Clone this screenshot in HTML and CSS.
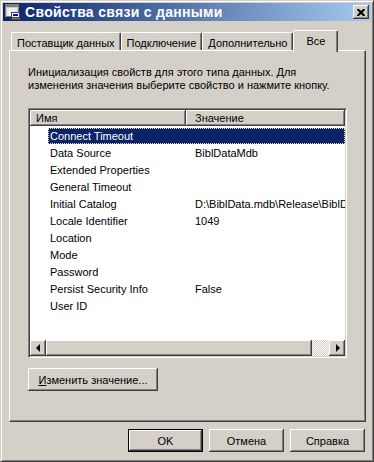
FILE: index.html
```html
<!DOCTYPE html>
<html lang="ru">
<head>
  <meta charset="UTF-8">
  <meta name="viewport" content="width=device-width, initial-scale=1.0">
  <title>Свойства связи с данными</title>
  <link rel="stylesheet" href="styles.css">
</head>
<body>
  <div class="window">
    <div class="titlebar">
      <svg class="app-icon" width="16" height="16" viewBox="0 0 16 16">
        <rect x="0.5" y="0.5" width="13" height="12" fill="#d4d0c8" stroke="#808080"/>
        <rect x="1" y="1" width="12" height="2" fill="#808080"/>
        <path d="M2 5h10M2 7h10M2 9h10M2 11h5M5 4v8M9 4v4" stroke="#fff" stroke-width="1"/>
        <rect x="6.5" y="8.5" width="8" height="5" fill="#fff" stroke="#404040"/>
        <rect x="8" y="10" width="5" height="2" fill="#0000ff"/>
        <rect x="7" y="14" width="8" height="2" fill="#808080"/>
        <rect x="6" y="15" width="10" height="1" fill="#404040"/>
      </svg>
      <span class="title">Свойства связи с данными</span>
      <div class="close-btn">
        <svg width="8" height="7" viewBox="0 0 8 7">
          <path d="M0 0h2l2 2l2 -2h2v1l-2.5 2.5l2.5 2.5v1h-2l-2 -2l-2 2h-2v-1l2.5 -2.5l-2.5 -2.5z" fill="#000"/>
        </svg>
      </div>
    </div>

    <div class="content">
      <div class="tabs">
        <div class="tab">Поставщик данных</div>
        <div class="tab">Подключение</div>
        <div class="tab">Дополнительно</div>
        <div class="tab active">Все</div>
      </div>

      <div class="panel">
        <p class="desc">Инициализация свойств для этого типа данных. Для<br>изменения значения выберите свойство и нажмите кнопку.</p>

        <div class="listview">
          <div class="lv-header">
            <div class="lv-col col-name">Имя</div>
            <div class="lv-col col-value">Значение</div>
          </div>
          <div class="lv-body">
            <div class="lv-row selected"><span class="name">Connect Timeout</span><span class="value"></span></div>
            <div class="lv-row"><span class="name">Data Source</span><span class="value">BiblDataMdb</span></div>
            <div class="lv-row"><span class="name">Extended Properties</span><span class="value"></span></div>
            <div class="lv-row"><span class="name">General Timeout</span><span class="value"></span></div>
            <div class="lv-row"><span class="name">Initial Catalog</span><span class="value">D:\BiblData.mdb\Release\BiblData.mdb</span></div>
            <div class="lv-row"><span class="name">Locale Identifier</span><span class="value">1049</span></div>
            <div class="lv-row"><span class="name">Location</span><span class="value"></span></div>
            <div class="lv-row"><span class="name">Mode</span><span class="value"></span></div>
            <div class="lv-row"><span class="name">Password</span><span class="value"></span></div>
            <div class="lv-row"><span class="name">Persist Security Info</span><span class="value">False</span></div>
            <div class="lv-row"><span class="name">User ID</span><span class="value"></span></div>
          </div>
          <div class="hscroll">
            <div class="sb-btn"><span class="arrow-left"></span></div>
            <div class="sb-thumb"></div>
            <div class="sb-track"></div>
            <div class="sb-btn"><span class="arrow-right"></span></div>
          </div>
        </div>

        <button class="btn edit-btn"><u>И</u>зменить значение...</button>
      </div>

      <div class="dialog-buttons">
        <button class="btn default">OK</button>
        <button class="btn">Отмена</button>
        <button class="btn">Справка</button>
      </div>
    </div>
  </div>
</body>
</html>
```

FILE: styles.css
```css
body {
  margin: 0;
  font-family: "Liberation Sans", Arial, sans-serif;
  font-size: 11px;
  color: #000;
  background: #d4d0c8;
}

.window {
  width: 374px;
  height: 462px;
  box-sizing: border-box;
  background: #d4d0c8;
  border: 1px solid;
  border-color: #d4d0c8 #404040 #404040 #d4d0c8;
  box-shadow: inset 1px 1px #fff, inset -1px -1px #808080;
  padding: 2px;
}

/* title bar */
.titlebar {
  height: 18px;
  display: flex;
  align-items: center;
  padding: 0 2px;
  background: linear-gradient(to right, #0a246a, #a6caf0);
  color: #fff;
}

.app-icon {
  flex: none;
  margin-right: 4px;
}

.title {
  font-family: "Liberation Sans", Arial, sans-serif;
  font-weight: bold;
  font-size: 14px;
  letter-spacing: 0.3px;
  white-space: nowrap;
}

.close-btn {
  margin-left: auto;
  width: 16px;
  height: 14px;
  box-sizing: border-box;
  background: #d4d0c8;
  box-shadow: inset -1px -1px #404040, inset 1px 1px #fff, inset -2px -2px #808080;
  display: flex;
  align-items: center;
  justify-content: center;
}

.close-btn svg {
  display: block;
}

/* body of the dialog */
.content {
  padding: 0 5px 0 6px;
}

.tabs {
  display: flex;
  height: 20px;
  margin-top: 9px;
  padding-left: 2px;
}

.tab {
  height: 18px;
  margin-top: 2px;
  box-sizing: border-box;
  padding: 3px 5px 0;
  line-height: 14px;
  white-space: nowrap;
  border: 1px solid;
  border-bottom: none;
  border-color: #fff #404040 #fff #fff;
  border-radius: 2px 2px 0 0;
  box-shadow: inset -1px 0 #808080;
}

.tab.active {
  position: relative;
  z-index: 1;
  height: 22px;
  margin-top: 0;
  margin-bottom: -2px;
  padding: 3px 12px 0;
  background: #d4d0c8;
}

.panel {
  height: 372px;
  box-sizing: border-box;
  border: 1px solid;
  border-color: #fff #404040 #404040 #fff;
  box-shadow: inset -1px -1px #808080;
  padding: 15px 18px 0;
}

.desc {
  margin: 0;
  line-height: 13px;
}

/* list view */
.listview {
  margin-top: 16px;
  height: 250px;
  box-sizing: border-box;
  padding: 1px;
  border: 1px solid;
  border-color: #808080 #fff #fff #808080;
  box-shadow: inset 1px 1px #404040, inset -1px -1px #d4d0c8;
  background: #fff;
  display: flex;
  flex-direction: column;
}

.lv-header {
  display: flex;
  height: 16px;
  flex: none;
}

.lv-col {
  box-sizing: border-box;
  background: #d4d0c8;
  line-height: 16px;
  box-shadow: inset -1px -1px #404040, inset 1px 1px #fff, inset -2px -2px #808080;
}

.col-name {
  width: 156px;
  padding-left: 6px;
}

.col-value {
  flex: 1;
  padding-left: 9px;
}

.lv-body {
  flex: 1;
  padding-top: 2px;
  overflow: hidden;
}

.lv-row {
  display: flex;
  height: 16px;
  line-height: 16px;
  margin: 0 0 1px 18px;
  white-space: nowrap;
}

.lv-row .name {
  width: 138px;
  flex: none;
  padding-left: 2px;
  box-sizing: border-box;
}

.lv-row .value {
  flex: 1;
  padding-left: 9px;
  overflow: hidden;
}

.lv-row.selected {
  background: #0a246a;
  color: #fff;
  outline: 1px dotted #f5db95;
  outline-offset: -1px;
}

/* horizontal scroll bar */
.hscroll {
  display: flex;
  height: 16px;
  flex: none;
}

.sb-btn,
.sb-thumb {
  width: 16px;
  height: 16px;
  box-sizing: border-box;
  background: #d4d0c8;
  box-shadow: inset -1px -1px #404040, inset 1px 1px #fff, inset -2px -2px #808080, inset 2px 2px #d4d0c8;
  display: flex;
  align-items: center;
  justify-content: center;
}

.sb-thumb {
  width: 266px;
}

.sb-track {
  flex: 1;
  background: repeating-conic-gradient(#d4d0c8 0 25%, #fff 0 50%) 0 0 / 2px 2px;
}

.arrow-left,
.arrow-right {
  width: 0;
  height: 0;
  border-top: 4px solid transparent;
  border-bottom: 4px solid transparent;
}

.arrow-left {
  border-right: 4px solid #000;
  margin-right: 1px;
}

.arrow-right {
  border-left: 4px solid #000;
  margin-left: 1px;
}

/* buttons */
.btn {
  height: 23px;
  box-sizing: border-box;
  padding: 0;
  font-family: inherit;
  font-size: 11px;
  font-weight: normal;
  color: #000;
  background: #d4d0c8;
  border: none;
  box-shadow: inset -1px -1px #404040, inset 1px 1px #fff, inset -2px -2px #808080;
}

.btn u {
  text-decoration: underline;
}

.edit-btn {
  display: block;
  margin-top: 10px;
  width: 130px;
}

.dialog-buttons {
  display: flex;
  justify-content: flex-end;
  gap: 6px;
  margin-top: 7px;
  padding-right: 1px;
}

.dialog-buttons .btn {
  width: 75px;
}

.btn.default {
  border: 1px solid #000;
}
```
